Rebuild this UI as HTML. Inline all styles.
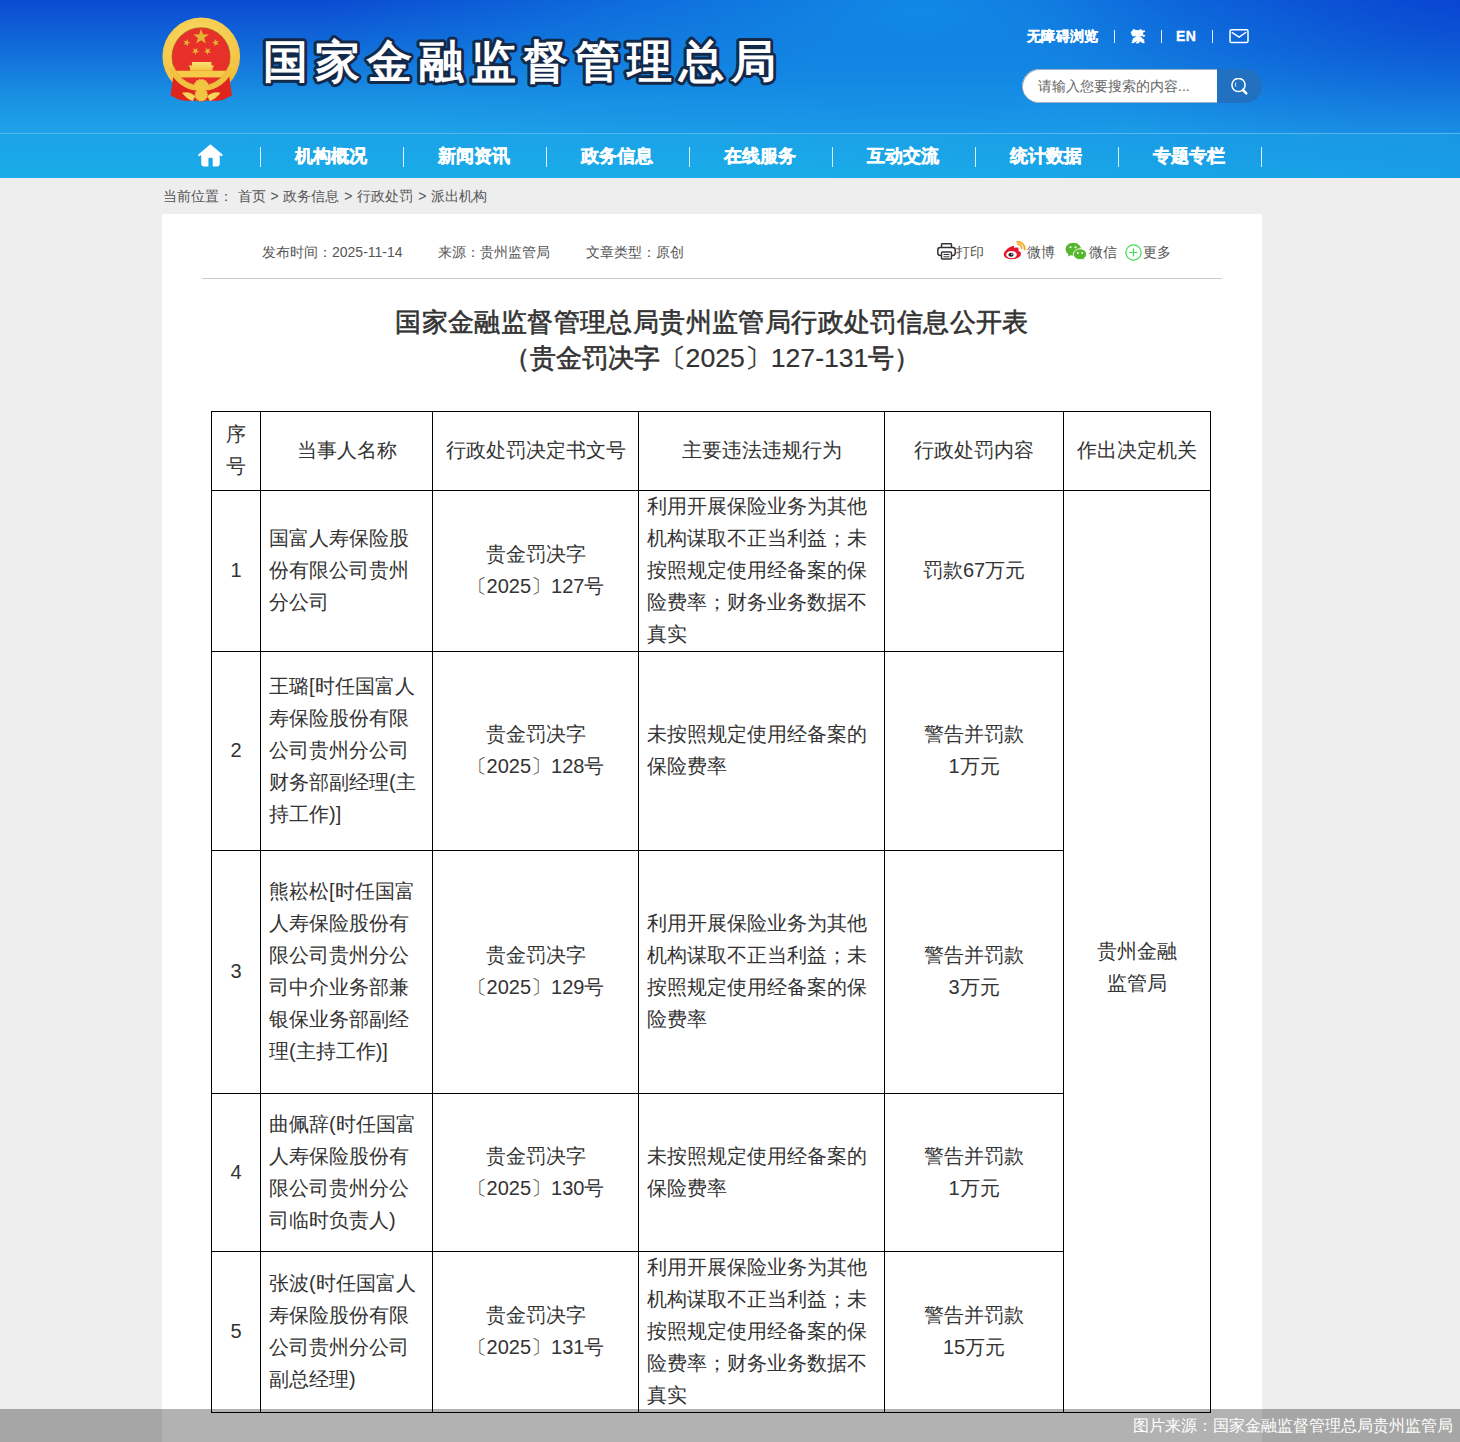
<!DOCTYPE html>
<html><head><meta charset="utf-8">
<style>
*{margin:0;padding:0;box-sizing:border-box}
html,body{width:1460px;height:1442px;overflow:hidden;background:#eeeeee;font-family:"Liberation Sans",sans-serif;color:#333}
.abs{position:absolute}
#hdr{position:absolute;left:0;top:0;width:1460px;height:133px;
 background:radial-gradient(ellipse 600px 200px at 920px 10px,rgba(18,140,230,0.95) 0%,rgba(18,140,230,0.5) 50%,rgba(18,140,230,0) 100%),linear-gradient(180deg,#0b4ad2 0%,#1270da 40%,#1a92e3 75%,#1ea2e8 100%)}
#hdr2{position:absolute;left:0;top:0;width:1460px;height:133px;
 background:radial-gradient(ellipse 420px 200px at 1460px 0px,rgba(8,62,208,0.6) 0%,rgba(8,62,208,0) 100%)}
#navline{position:absolute;left:0;top:133px;width:1460px;height:1px;background:#52b8ef}
#nav{position:absolute;left:0;top:134px;width:1460px;height:44px;background:linear-gradient(90deg,rgba(20,120,220,0) 0%,rgba(20,120,220,0) 55%,rgba(20,110,215,0.22) 100%),linear-gradient(180deg,#1ba2e7,#19ace9)}
.sep{position:absolute;top:147px;width:1px;height:20px;background:rgba(255,255,255,0.85)}
.ni{position:absolute;top:144px;height:24px;line-height:24px;font-size:18px;font-weight:bold;color:#fff;text-align:center;width:143px;-webkit-text-stroke:0.4px #fff}
.tl{position:absolute;top:27px;height:18px;line-height:18px;font-size:14px;font-weight:bold;color:#fff;-webkit-text-stroke:0.3px #fff;letter-spacing:0.3px}
.tsep{position:absolute;top:30px;width:1px;height:13px;background:rgba(255,255,255,0.9)}
#title{position:absolute;left:263px;top:32.5px;font-size:46px;font-weight:bold;letter-spacing:5.8px;line-height:56px;color:#fff;white-space:nowrap;-webkit-text-stroke:6.5px #13294a;paint-order:stroke fill;stroke-linejoin:round}
#crumb{position:absolute;left:163px;top:186px;font-size:14px;line-height:20px;color:#555;white-space:nowrap;word-spacing:1px}
#card{position:absolute;left:162px;top:214px;width:1100px;height:1228px;background:#fff}
.meta{position:absolute;top:242px;font-size:14px;line-height:20px;color:#555;white-space:nowrap}
#hr{position:absolute;left:202px;top:278px;width:1020px;height:1px;background:#ccc}
.h1{position:absolute;left:162px;width:1100px;text-align:center;font-size:26.3px;font-weight:normal;color:#333;line-height:36px;white-space:nowrap;-webkit-text-stroke:0.6px #333}
.vl{position:absolute;width:1px;background:#000}
.hl{position:absolute;height:1px;background:#000}
.c{position:absolute;display:flex;align-items:center;font-size:20px;line-height:32px;color:#333;padding-bottom:2px}
.cc{justify-content:center;text-align:center}
.cl{padding-left:8px}
#foot{position:absolute;left:0;top:1409px;width:1460px;height:33px;background:rgba(0,0,0,0.3)}
#foottxt{position:absolute;right:7px;top:1416px;font-size:16px;line-height:20px;color:#fff;white-space:nowrap}
.nw{font-weight:normal;font-size:26.6px;-webkit-text-stroke:0.2px #333}
</style></head><body>
<div id="hdr"></div><div id="hdr2"></div>
<div id="navline"></div><div id="nav"></div>

<!-- emblem -->
<svg class="abs" style="left:150px;top:10px" width="150" height="100" viewBox="0 0 1460 973">
<defs>
<radialGradient id="gold" cx="0.45" cy="0.35" r="0.75"><stop offset="0" stop-color="#fbdc6c"/><stop offset="0.75" stop-color="#f3c444"/><stop offset="1" stop-color="#e6a52a"/></radialGradient>
<linearGradient id="ylw" x1="0" y1="0" x2="0" y2="1"><stop offset="0" stop-color="#fbe07a"/><stop offset="1" stop-color="#f3c53e"/></linearGradient>
<clipPath id="disc"><circle cx="497" cy="455" r="282"/></clipPath>
</defs>
<circle cx="499" cy="452" r="378" fill="url(#gold)"/>
<circle cx="497" cy="455" r="287" fill="#a8741c"/>
<circle cx="497" cy="455" r="280" fill="#e8302a"/>
<polygon points="497.0,182.0 515.8,236.1 573.1,237.3 527.4,271.9 544.0,326.7 497.0,294.0 450.0,326.7 466.6,271.9 420.9,237.3 478.2,236.1" fill="#e2b432"/>
<polygon points="366.6,282.3 368.5,308.7 393.9,316.1 369.4,326.1 370.3,352.5 353.2,332.3 328.2,341.3 342.2,318.8 326.0,297.8 351.7,304.2" fill="#e2b432"/>
<polygon points="630.4,282.3 645.3,304.2 671.0,297.8 654.8,318.8 668.8,341.3 643.8,332.3 626.7,352.5 627.6,326.1 603.1,316.1 628.5,308.7" fill="#e2b432"/>
<polygon points="461.5,368.0 456.5,394.0 479.2,407.7 452.9,411.0 446.9,436.8 435.6,412.8 409.2,415.0 428.5,396.9 418.2,372.5 441.5,385.3" fill="#e2b432"/>
<polygon points="541.5,368.0 561.5,385.3 584.8,372.5 574.5,396.9 593.8,415.0 567.4,412.8 556.1,436.8 550.1,411.0 523.8,407.7 546.5,394.0" fill="#e2b432"/>
<path d="M408,506 L598,506 L598,540 L624,540 L610,563 L610,591 L390,591 L390,563 L375,540 L408,540 Z" fill="url(#ylw)"/>
<g clip-path="url(#disc)"><rect x="200" y="591" width="600" height="65" fill="#f5cb48"/></g>
<path d="M228,640 Q300,700 380,740 L470,790 L350,885 L275,870 L240,850 L200,835 Z" fill="#e0261c"/>
<path d="M770,640 Q698,700 618,740 L528,790 L648,885 L722,870 L758,850 L798,835 Z" fill="#e0261c"/>
<polygon points="811.8,569.6 804.2,588.6 795.5,607.1 785.6,625.0 774.7,642.3 762.8,658.9 749.8,674.8 735.9,689.8 721.2,704.0 705.5,717.2 689.1,729.4 672.0,740.6 654.3,750.8 635.9,759.8 617.1,767.7 597.7,774.5 578.0,780.0 558.0,784.4 537.8,787.5 517.5,789.4 497.0,790.0 476.5,789.4 456.2,787.5 436.0,784.4 416.0,780.0 396.3,774.5 376.9,767.7 358.1,759.8 339.7,750.8 322.0,740.6 304.9,729.4 288.5,717.2 272.8,704.0 258.1,689.8 244.2,674.8 231.2,658.9 219.3,642.3 208.4,625.0 198.5,607.1 189.8,588.6 182.2,569.6 233.9,550.8 240.2,566.6 247.5,582.1 255.7,597.1 264.9,611.6 274.9,625.5 285.7,638.7 297.3,651.3 309.6,663.1 322.7,674.1 336.4,684.4 350.7,693.7 365.5,702.2 380.9,709.8 396.7,716.4 412.8,722.0 429.3,726.7 446.0,730.3 462.9,732.9 479.9,734.5 497.0,735.0 514.1,734.5 531.1,732.9 548.0,730.3 564.7,726.7 581.2,722.0 597.3,716.4 613.1,709.8 628.5,702.2 643.3,693.7 657.6,684.4 671.3,674.1 684.4,663.1 696.7,651.3 708.3,638.7 719.1,625.5 729.1,611.6 738.3,597.1 746.5,582.1 753.8,566.6 760.1,550.8" fill="#f2c040"/>
<polygon points="577.0,745.0 563.3,759.7 569.3,778.8 550.6,786.2 547.6,806.0 527.6,804.5 516.4,821.0 499.0,811.0 481.6,821.0 470.4,804.5 450.4,806.0 447.4,786.2 428.7,778.8 434.7,759.7 421.0,745.0 434.7,730.3 428.7,711.2 447.4,703.8 450.4,684.0 470.4,685.5 481.6,669.0 499.0,679.0 516.4,669.0 527.6,685.5 547.6,684.0 550.6,703.8 569.3,711.2 563.3,730.3" fill="#f3c544"/>
<path d="M380,800 Q440,770 499,790 Q558,770 618,800 L640,885 L560,880 Q499,900 438,880 L358,885 Z" fill="#dd2a1e"/>
<path d="M311,805 Q385,785 440,840 L415,885 Q350,860 311,805 Z" fill="#f7d35a"/>
<path d="M687,805 Q613,785 558,840 L583,885 Q648,860 687,805 Z" fill="#f7d35a"/>
<polygon points="567.0,825.0 555.5,837.9 560.3,854.5 544.3,861.2 541.4,878.2 524.2,877.3 514.1,891.3 499.0,883.0 483.9,891.3 473.8,877.3 456.6,878.2 453.7,861.2 437.7,854.5 442.5,837.9 431.0,825.0 442.5,812.1 437.7,795.5 453.7,788.8 456.6,771.8 473.8,772.7 483.9,758.7 499.0,767.0 514.1,758.7 524.2,772.7 541.4,771.8 544.3,788.8 560.3,795.5 555.5,812.1" fill="#f2c443"/>
</svg>
<svg class="abs" style="left:250px;top:20px" width="560" height="80" viewBox="0 0 560 80"><text x="13" y="56.5" font-family="Liberation Sans, sans-serif" font-size="45" font-weight="bold" letter-spacing="7" fill="#fff" stroke="#13294a" stroke-width="6" stroke-linejoin="round" paint-order="stroke fill">国家金融监督管理总局</text></svg>

<!-- top links -->
<div class="tl" style="left:1027px">无障碍浏览</div>
<div class="tsep" style="left:1114px"></div>
<div class="tl" style="left:1131px">繁</div>
<div class="tsep" style="left:1161px"></div>
<div class="tl" style="left:1176px">EN</div>
<div class="tsep" style="left:1212px"></div>
<svg class="abs" style="left:1222px;top:24px" width="34" height="24" viewBox="0 0 1460 1031"><rect x="345" y="245" width="772" height="550" rx="70" fill="none" stroke="#fff" stroke-width="66"/><path d="M440,375 L735,565 L1020,365" fill="none" stroke="#fff" stroke-width="62" stroke-linecap="round"/></svg>

<!-- search -->
<div class="abs" style="left:1022px;top:69px;width:240px;height:34px;border-radius:17px;background:#2270c0;overflow:hidden">
 <div class="abs" style="left:0;top:0;width:195px;height:34px;background:#fff;border-radius:17px 0 0 17px;box-shadow:inset 1px 1px 0 #9fb0c4,inset 0 -1px 0 #9fb0c4"></div>
 <div class="abs" style="left:16px;top:7px;font-size:14px;line-height:20px;color:#666;white-space:nowrap">请输入您要搜索的内容...</div>
 <svg class="abs" style="left:208px;top:9px" width="20" height="20" viewBox="0 0 20 20"><circle cx="8.5" cy="7" r="6.6" fill="none" stroke="#fff" stroke-width="1.5"/><path d="M13,12 L16.3,15.3" stroke="#fff" stroke-width="2.6" stroke-linecap="round"/><path d="M5.8,4.6 Q4.9,6.6 5.8,8.6" fill="none" stroke="#fff" stroke-width="0.9"/></svg>
</div>

<!-- nav -->
<svg class="abs" style="left:190px;top:138px" width="42" height="34" viewBox="0 0 1460 1182"><path d="M710,215 L1130,575 Q1150,640 1085,630 L1035,590 L1035,890 Q1035,990 935,990 L790,990 L790,730 Q790,690 750,690 L680,690 Q640,690 640,730 L640,990 L490,990 Q390,990 390,890 L390,590 L335,630 Q270,640 290,575 Z" fill="#fff"/></svg>
<div class="sep" style="left:260px"></div>
<div class="ni" style="left:259.5px">机构概况</div>
<div class="sep" style="left:403px"></div>
<div class="ni" style="left:402.5px">新闻资讯</div>
<div class="sep" style="left:546px"></div>
<div class="ni" style="left:545.5px">政务信息</div>
<div class="sep" style="left:689px"></div>
<div class="ni" style="left:688.5px">在线服务</div>
<div class="sep" style="left:832px"></div>
<div class="ni" style="left:831.5px">互动交流</div>
<div class="sep" style="left:975px"></div>
<div class="ni" style="left:974.5px">统计数据</div>
<div class="sep" style="left:1118px"></div>
<div class="ni" style="left:1117.5px">专题专栏</div>
<div class="sep" style="left:1261px"></div>

<div id="crumb">当前位置：<span style="margin-left:4.5px"></span>首页 &gt; 政务信息 &gt; 行政处罚 &gt; 派出机构</div>

<div id="card"></div>
<div class="meta" style="left:262px">发布时间：2025-11-14</div>
<div class="meta" style="left:438px">来源：贵州监管局</div>
<div class="meta" style="left:586px">文章类型：原创</div>
<!-- share -->
<div id="share">
<svg class="abs" style="left:937px;top:243px" width="19" height="17" viewBox="0 0 19 17"><path d="M4.5,4.5 V1.5 Q4.5,0.8 5.2,0.8 H13.8 Q14.5,0.8 14.5,1.5 V4.5" fill="none" stroke="#333" stroke-width="1.4"/><rect x="0.8" y="4.6" width="17.4" height="8" rx="2.5" fill="none" stroke="#333" stroke-width="1.5"/><rect x="4.5" y="9" width="10" height="7" rx="1" fill="#fff" stroke="#333" stroke-width="1.4"/><path d="M6.5,11.5 H12.5 M6.5,13.8 H12.5" stroke="#333" stroke-width="1"/></svg>
<div class="meta" style="left:956px">打印</div>
<svg class="abs" style="left:1003px;top:241px" width="23" height="19" viewBox="0 0 23 19"><path d="M9.5,5 C5,6.5 0.8,10.5 0.8,13.5 C0.8,16.5 4.5,18.3 9,18.3 C14.5,18.3 18,15.3 18,12.6 C18,11 16.5,10.2 15.3,9.8 C15.8,8.5 15.9,7 14.3,6.5 C13,6.1 11.5,6.8 11,7 C11.5,5.5 11.2,4.6 9.5,5 Z" fill="#e6162d"/><ellipse cx="8.5" cy="13.6" rx="5.3" ry="3.6" fill="#fff"/><ellipse cx="8" cy="13.8" rx="2.6" ry="2" fill="#222"/><circle cx="8.8" cy="13.3" r="0.7" fill="#fff"/><path d="M14.5,3.2 C17,3 19,5 18.7,7.5" fill="none" stroke="#f7a21b" stroke-width="1.6" stroke-linecap="round"/><path d="M14.2,0.9 C18.5,0.5 22.2,4 21.6,8.4" fill="none" stroke="#f7a21b" stroke-width="1.7" stroke-linecap="round"/></svg>
<div class="meta" style="left:1027px">微博</div>
<svg class="abs" style="left:1065px;top:242px" width="23" height="19" viewBox="0 0 23 19"><path d="M8.3,0.8 C3.9,0.8 0.6,3.7 0.6,7.2 C0.6,9.2 1.7,10.9 3.4,12.1 L2.8,14.6 L5.6,13.2 C6.5,13.5 7.4,13.6 8.3,13.6 C12.7,13.6 16,10.7 16,7.2 C16,3.7 12.7,0.8 8.3,0.8 Z" fill="#55b72f"/><path d="M15,6.8 C11.4,6.8 8.4,9.2 8.4,12.3 C8.4,15.3 11.4,17.7 15,17.7 C15.8,17.7 16.5,17.6 17.2,17.4 L19.4,18.6 L18.9,16.5 C20.6,15.5 21.6,14 21.6,12.3 C21.6,9.2 18.6,6.8 15,6.8 Z" fill="#55b72f" stroke="#fff" stroke-width="1"/><circle cx="5.5" cy="5.2" r="1" fill="#fff"/><circle cx="10.5" cy="5.2" r="1" fill="#fff"/><circle cx="12.8" cy="11" r="0.9" fill="#fff"/><circle cx="17.2" cy="11" r="0.9" fill="#fff"/></svg>
<div class="meta" style="left:1089px">微信</div>
<svg class="abs" style="left:1125px;top:244px" width="17" height="17" viewBox="0 0 17 17"><circle cx="8.5" cy="8.5" r="7.6" fill="none" stroke="#3ddc55" stroke-width="1.2"/><path d="M8.5,4.5 V12.5 M4.5,8.5 H12.5" stroke="#3ddc55" stroke-width="1.2"/></svg>
<div class="meta" style="left:1143px">更多</div>
</div>
<div id="hr"></div>

<div class="h1" style="top:304px;letter-spacing:0.4px">国家金融监督管理总局贵州监管局行政处罚信息公开表</div>
<div class="h1" style="top:340px">（贵金罚决字〔<span class="nw">2025</span>〕<span class="nw">127-131</span>号）</div>

<div id="tbl">
<div class="vl" style="left:211px;top:411px;height:1002px"></div>
<div class="vl" style="left:260px;top:411px;height:1002px"></div>
<div class="vl" style="left:432px;top:411px;height:1002px"></div>
<div class="vl" style="left:638px;top:411px;height:1002px"></div>
<div class="vl" style="left:884px;top:411px;height:1002px"></div>
<div class="vl" style="left:1063px;top:411px;height:1002px"></div>
<div class="vl" style="left:1210px;top:411px;height:1002px"></div>
<div class="hl" style="left:211px;top:411px;width:1000px"></div>
<div class="hl" style="left:211px;top:490px;width:1000px"></div>
<div class="hl" style="left:211px;top:651px;width:853px"></div>
<div class="hl" style="left:211px;top:850px;width:853px"></div>
<div class="hl" style="left:211px;top:1093px;width:853px"></div>
<div class="hl" style="left:211px;top:1251px;width:853px"></div>
<div class="hl" style="left:211px;top:1412px;width:1000px"></div>
<div class="c cc" style="left:212px;top:412px;width:48px;height:78px"><div>序<br>号</div></div>
<div class="c cc" style="left:261px;top:412px;width:171px;height:78px"><div>当事人名称</div></div>
<div class="c cc" style="left:433px;top:412px;width:205px;height:78px"><div>行政处罚决定书文号</div></div>
<div class="c cc" style="left:639px;top:412px;width:245px;height:78px"><div>主要违法违规行为</div></div>
<div class="c cc" style="left:885px;top:412px;width:178px;height:78px"><div>行政处罚内容</div></div>
<div class="c cc" style="left:1064px;top:412px;width:146px;height:78px"><div>作出决定机关</div></div>
<div class="c cc" style="left:212px;top:491px;width:48px;height:160px"><div>1</div></div>
<div class="c cl" style="left:261px;top:491px;width:171px;height:160px"><div>国富人寿保险股<br>份有限公司贵州<br>分公司</div></div>
<div class="c cc" style="left:433px;top:491px;width:205px;height:160px"><div>贵金罚决字<br>〔2025〕127号</div></div>
<div class="c cl" style="left:639px;top:491px;width:245px;height:160px"><div>利用开展保险业务为其他<br>机构谋取不正当利益；未<br>按照规定使用经备案的保<br>险费率；财务业务数据不<br>真实</div></div>
<div class="c cc" style="left:885px;top:491px;width:178px;height:160px"><div>罚款67万元</div></div>
<div class="c cc" style="left:212px;top:652px;width:48px;height:198px"><div>2</div></div>
<div class="c cl" style="left:261px;top:652px;width:171px;height:198px"><div>王璐[时任国富人<br>寿保险股份有限<br>公司贵州分公司<br>财务部副经理(主<br>持工作)]</div></div>
<div class="c cc" style="left:433px;top:652px;width:205px;height:198px"><div>贵金罚决字<br>〔2025〕128号</div></div>
<div class="c cl" style="left:639px;top:652px;width:245px;height:198px"><div>未按照规定使用经备案的<br>保险费率</div></div>
<div class="c cc" style="left:885px;top:652px;width:178px;height:198px"><div>警告并罚款<br>1万元</div></div>
<div class="c cc" style="left:212px;top:851px;width:48px;height:242px"><div>3</div></div>
<div class="c cl" style="left:261px;top:851px;width:171px;height:242px"><div>熊崧松[时任国富<br>人寿保险股份有<br>限公司贵州分公<br>司中介业务部兼<br>银保业务部副经<br>理(主持工作)]</div></div>
<div class="c cc" style="left:433px;top:851px;width:205px;height:242px"><div>贵金罚决字<br>〔2025〕129号</div></div>
<div class="c cl" style="left:639px;top:851px;width:245px;height:242px"><div>利用开展保险业务为其他<br>机构谋取不正当利益；未<br>按照规定使用经备案的保<br>险费率</div></div>
<div class="c cc" style="left:885px;top:851px;width:178px;height:242px"><div>警告并罚款<br>3万元</div></div>
<div class="c cc" style="left:212px;top:1094px;width:48px;height:157px"><div>4</div></div>
<div class="c cl" style="left:261px;top:1094px;width:171px;height:157px"><div>曲佩辞(时任国富<br>人寿保险股份有<br>限公司贵州分公<br>司临时负责人)</div></div>
<div class="c cc" style="left:433px;top:1094px;width:205px;height:157px"><div>贵金罚决字<br>〔2025〕130号</div></div>
<div class="c cl" style="left:639px;top:1094px;width:245px;height:157px"><div>未按照规定使用经备案的<br>保险费率</div></div>
<div class="c cc" style="left:885px;top:1094px;width:178px;height:157px"><div>警告并罚款<br>1万元</div></div>
<div class="c cc" style="left:212px;top:1252px;width:48px;height:160px"><div>5</div></div>
<div class="c cl" style="left:261px;top:1252px;width:171px;height:160px"><div>张波(时任国富人<br>寿保险股份有限<br>公司贵州分公司<br>副总经理)</div></div>
<div class="c cc" style="left:433px;top:1252px;width:205px;height:160px"><div>贵金罚决字<br>〔2025〕131号</div></div>
<div class="c cl" style="left:639px;top:1252px;width:245px;height:160px"><div>利用开展保险业务为其他<br>机构谋取不正当利益；未<br>按照规定使用经备案的保<br>险费率；财务业务数据不<br>真实</div></div>
<div class="c cc" style="left:885px;top:1252px;width:178px;height:160px"><div>警告并罚款<br>15万元</div></div>
<div class="c cc" style="left:1064px;top:935.5px;width:146px;height:64px"><div>贵州金融<br>监管局</div></div>
</div>

<div id="foot"></div>
<div id="foottxt">图片来源：国家金融监督管理总局贵州监管局</div>
</body></html>
